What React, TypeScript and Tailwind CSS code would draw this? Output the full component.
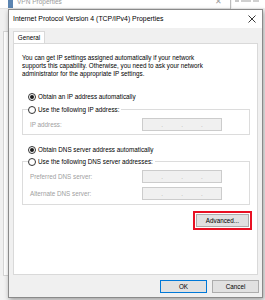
import React from "react";

const font = { fontFamily: '"Liberation Sans", Arial, sans-serif' };

function Radio({ checked }: { checked?: boolean }) {
  return (
    <span className="w-[8px] h-[8px] rounded-full border border-[#333333] bg-white flex items-center justify-center shrink-0">
      {checked ? <span className="w-[4px] h-[4px] rounded-full bg-[#1a1a1a]" /> : null}
    </span>
  );
}

function IpField() {
  return (
    <div className="w-[80px] h-[13px] border border-[#cccccc] bg-[#f0f0f0] flex items-center justify-evenly text-[#9a9a9a] text-[6px] leading-[6px]">
      <span>.</span>
      <span>.</span>
      <span>.</span>
    </div>
  );
}

function FieldRow({ label, className }: { label: string; className?: string }) {
  return (
    <div className={"flex items-center " + (className ?? "")}>
      <span className="ml-[7px] w-[112px] text-[#a0a0a0]">{label}</span>
      <IpField />
    </div>
  );
}

export default function App() {
  return (
    <div
      className="relative w-[265px] h-[300px] overflow-hidden bg-[#f2f2f2] text-[6.3px] leading-[8px] text-black"
      style={font}
    >
      {/* Background window: VPN Properties */}
      <div className="absolute left-[0px] top-[-5px] w-[231px] h-[281px] bg-[#f0f0f0] border-r border-[#bdbdbd] flex flex-col">
        <div className="h-[14px] bg-white flex items-center border-b border-[#e3e3e3]">
          <span className="ml-[8px] w-[5px] h-[9px] bg-[#5b84b1] mt-[3px]" />
          <span className="ml-[4px] text-[#9a9a9a] text-[6.5px]">VPN Properties</span>
          <span className="ml-auto mr-[8px] text-[#a0a0a0] text-[8px]">✕</span>
        </div>
        <div className="ml-[3px] mt-[22px] flex-1 border border-[#d5d5d5] bg-white" />
      </div>
      {/* Window at top right */}
      <div className="absolute left-[232px] top-[0px] w-[40px] h-[8px] bg-white flex items-start gap-[2px] pl-[3px]">
        <span className="w-[4px] h-[2px] bg-[#c8c8c8]" />
        <span className="w-[10px] h-[2px] bg-[#d0d0d0]" />
        <span className="w-[6px] h-[2px] bg-[#d0d0d0]" />
      </div>

      {/* Dialog */}
      <div className="absolute left-[8px] top-[9px] w-[255px] h-[289px] border border-[#8a8a8a] bg-[#f0f0f0] shadow-[1px_2px_5px_rgba(0,0,0,0.35)] flex flex-col">
        <div className="h-[18px] bg-white flex items-center shrink-0">
          <span className="ml-[4px] text-[6.9px]">Internet Protocol Version 4 (TCP/IPv4) Properties</span>
          <svg className="ml-auto mr-[6px]" width="8" height="8" viewBox="0 0 8 8">
            <path d="M0.5 0.5 L7.5 7.5 M7.5 0.5 L0.5 7.5" stroke="#222" strokeWidth="0.9" />
          </svg>
        </div>

        <div className="flex mt-[3px] ml-[4px]">
          <div className="h-[13px] w-[32px] border border-b-0 border-[#d9d9d9] bg-white flex items-center justify-center">
            <span>General</span>
          </div>
        </div>

        <div className="mx-[4px] -mt-[1px] h-[232px] border border-[#d9d9d9] bg-white flex flex-col">
          <p className="ml-[8px] mt-[10px]">
            You can get IP settings assigned automatically if your network
            <br />
            supports this capability. Otherwise, you need to ask your network
            <br />
            administrator for the appropriate IP settings.
          </p>

          <div className="ml-[14px] mt-[14px] h-[9px] flex items-center gap-[2px]">
            <Radio checked />
            <span>Obtain an IP address automatically</span>
          </div>

          <fieldset className="ml-[8px] mr-[7px] mt-[4px] border border-[#dcdcdc] pb-[3px]">
            <legend className="ml-[5px] pr-[2px] h-[9px] flex items-center gap-[2px] bg-white">
              <Radio />
              <span>Use the following IP address:</span>
            </legend>
            <FieldRow label="IP address:" className="mt-[4px]" />
          </fieldset>

          <div className="ml-[14px] mt-[10px] h-[9px] flex items-center gap-[2px]">
            <Radio checked />
            <span>Obtain DNS server address automatically</span>
          </div>

          <fieldset className="ml-[8px] mr-[7px] mt-[3px] border border-[#dcdcdc] pb-[4px]">
            <legend className="ml-[5px] pr-[2px] h-[9px] flex items-center gap-[2px] bg-white">
              <Radio />
              <span>Use the following DNS server addresses:</span>
            </legend>
            <FieldRow label="Preferred DNS server:" className="mt-[4px]" />
            <FieldRow label="Alternate DNS server:" className="mt-[4px]" />
          </fieldset>

          <div className="self-end mr-[5px] mt-[6px] border-2 border-[#e81123] p-[1px]">
            <div className="w-[53px] h-[13px] border border-[#adadad] bg-[#e1e1e1] flex items-center justify-center">
              Advanced...
            </div>
          </div>
        </div>

        <div className="flex justify-end gap-[5px] mr-[3px] mt-[5px]">
          <div className="w-[47px] h-[13px] border border-[#0078d7] bg-[#e1e1e1] flex items-center justify-center">
            OK
          </div>
          <div className="w-[47px] h-[13px] border border-[#adadad] bg-[#e1e1e1] flex items-center justify-center">
            Cancel
          </div>
        </div>
      </div>
    </div>
  );
}
